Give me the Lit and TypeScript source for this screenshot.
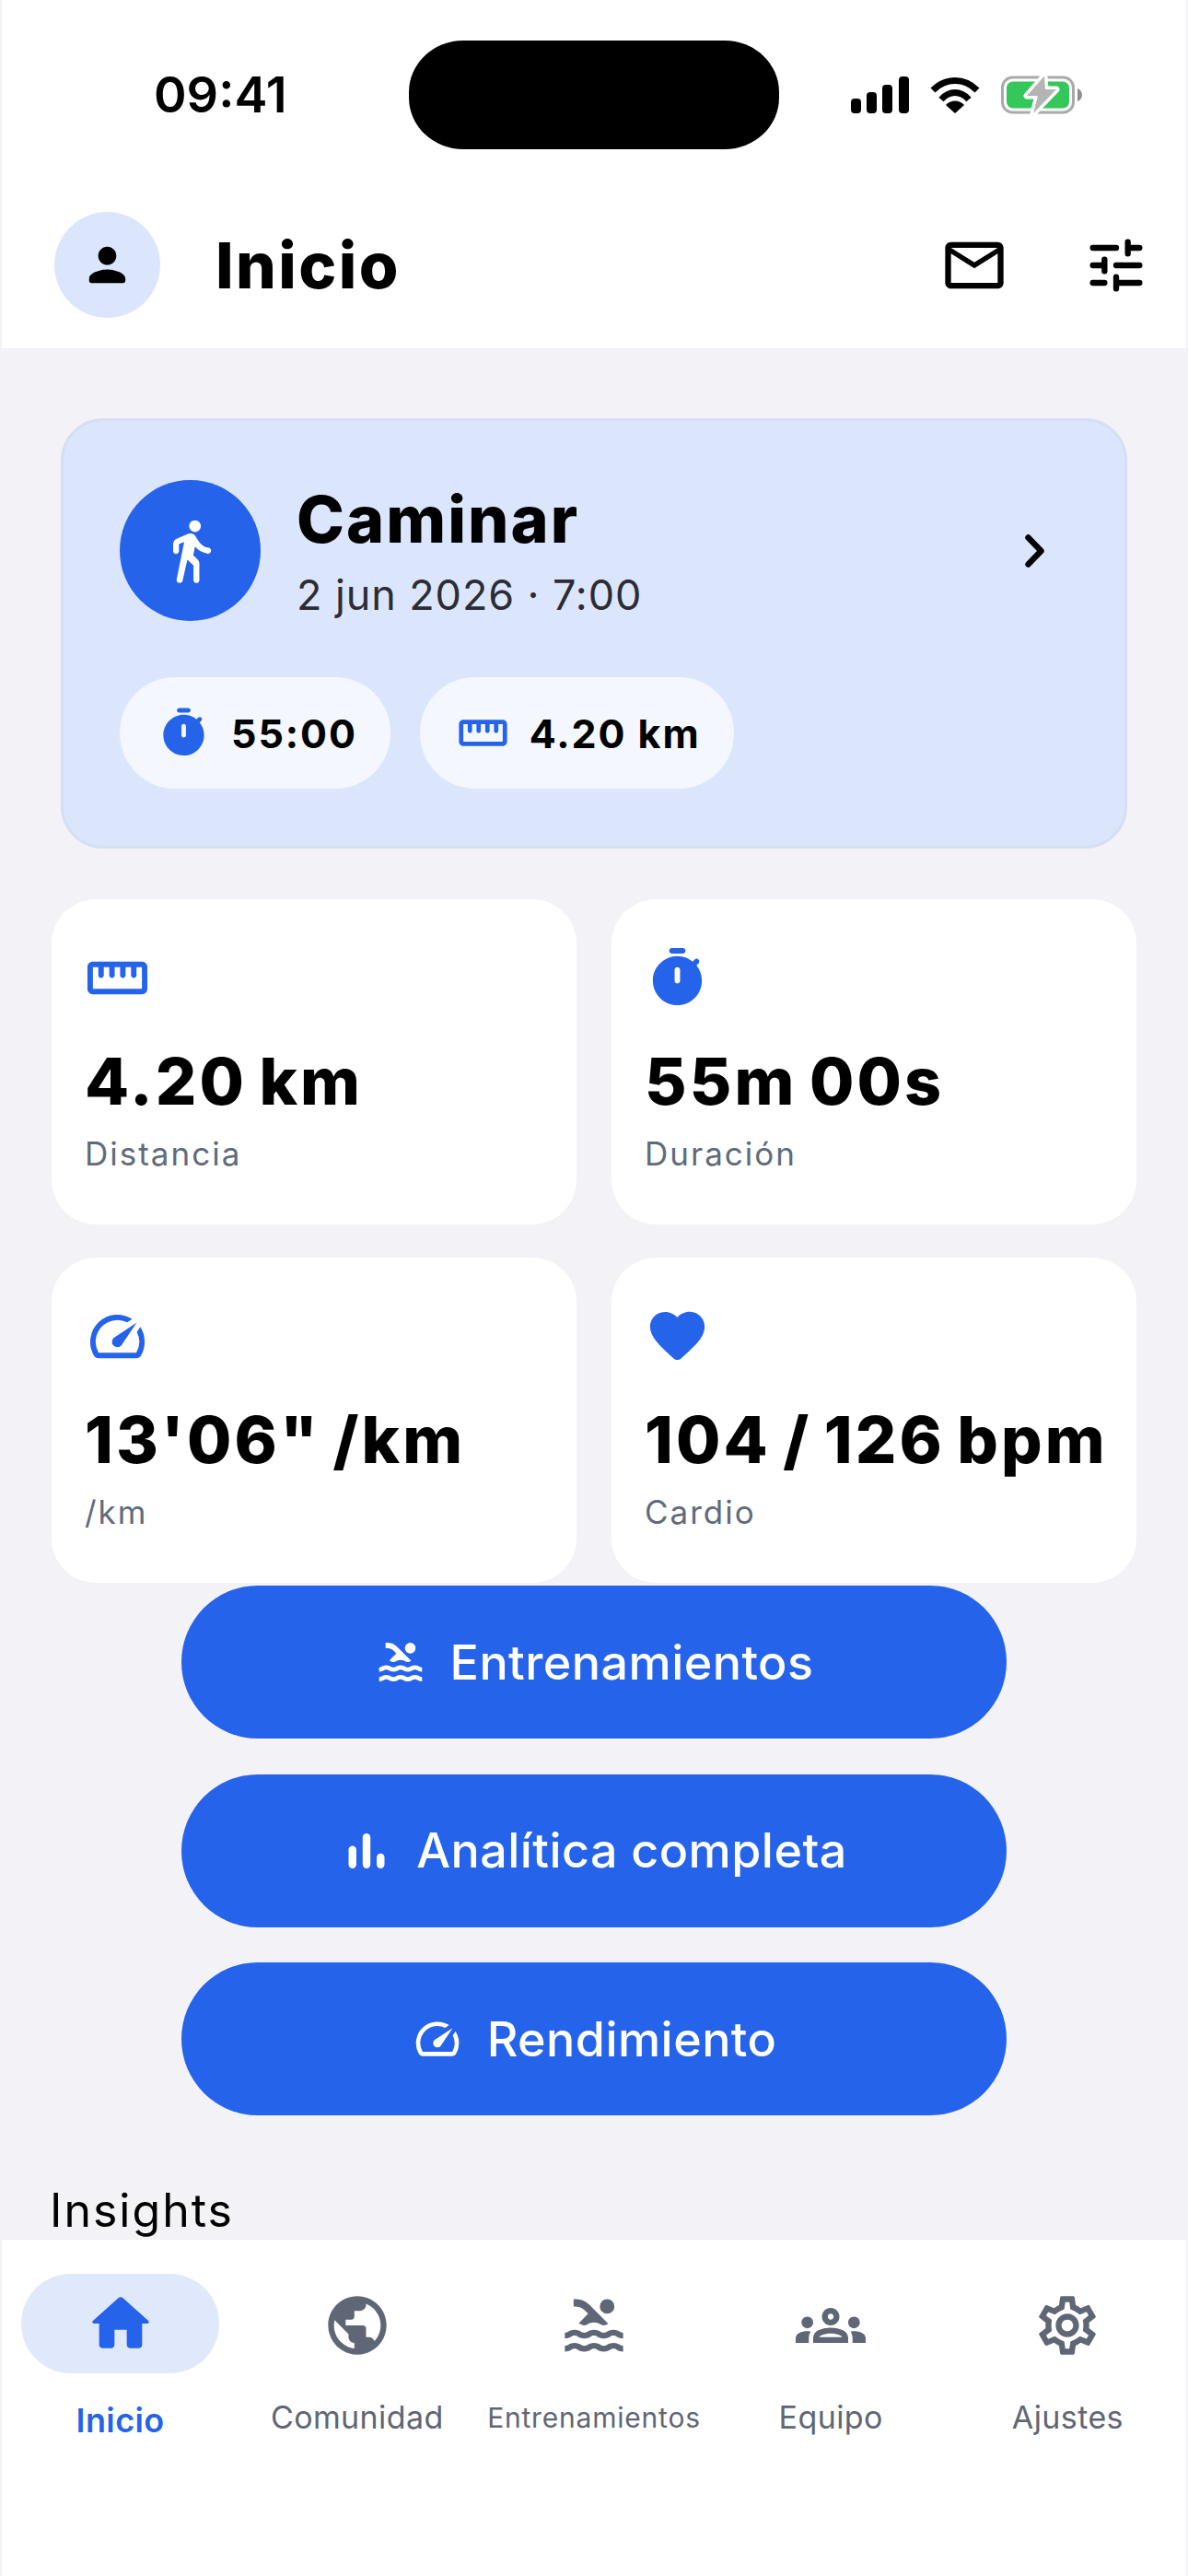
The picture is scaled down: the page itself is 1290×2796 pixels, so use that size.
import { LitElement, html, css, svg } from 'lit';
import { customElement } from 'lit/decorators.js';

// material-style glyphs, all on a 24 box
const ICONS: Record<string, any> = {
  person: svg`<path d="M12 12c2.21 0 4-1.79 4-4s-1.79-4-4-4-4 1.79-4 4 1.79 4 4 4zm0 2c-2.67 0-8 1.34-8 4v1c0 .55.45 1 1 1h14c.55 0 1-.45 1-1v-1c0-2.66-5.33-4-8-4z"/>`,
  mail: svg`<path d="M20 4H4c-1.1 0-1.99.9-1.99 2L2 18c0 1.1.9 2 2 2h16c1.1 0 2-.9 2-2V6c0-1.1-.9-2-2-2zm0 14H4V8l8 5 8-5v10zm-8-7L4 6h16l-8 5z"/>`,
  tune: svg`<path fill="none" stroke="currentColor" stroke-width="2" stroke-linecap="round" d="M4 6h8M16 4v4M16 6h4M4 12h3M8 10v4M12 12h8M4 18h4M12 16v4M12 18h8"/>`,
  walk: svg`<path d="M13.5 5.5c1.1 0 2-.9 2-2s-.9-2-2-2-2 .9-2 2 .9 2 2 2zM9.89 19.38l1-4.38 2.1 2v5c0 .55.45 1 1 1s1-.45 1-1v-5.64c0-.55-.22-1.07-.62-1.45L12.9 13.5l.6-3c1.07 1.24 2.62 2.13 4.36 2.41.6.09 1.14-.39 1.14-1 0-.49-.36-.9-.85-.98-1.52-.25-2.78-1.15-3.45-2.33l-1-1.6c-.56-.89-1.68-1.25-2.65-.84L7.22 7.78C6.48 8.1 6 8.82 6 9.63V12c0 .55.45 1 1 1s1-.45 1-1V9.6l1.8-.7L7.2 21.8c-.13.61.36 1.2 1 1.2h.08c.47 0 .87-.32.98-.78l.63-2.84z"/>`,
  timer: svg`<path fill-rule="evenodd" d="M14 1h-4c-.55 0-1 .45-1 1s.45 1 1 1h4c.55 0 1-.45 1-1s-.45-1-1-1zm-2 13c-.55 0-1-.45-1-1V9c0-.55.45-1 1-1s1 .45 1 1v4c0 .55-.45 1-1 1zm7.03-6.61l.75-.75c.38-.38.39-1.01 0-1.4l-.01-.01c-.39-.39-1.01-.38-1.4 0l-.75.75C16.07 4.74 14.12 4 12 4c-4.8 0-8.88 3.96-9 8.76C2.87 17.84 6.94 22 12 22c4.98 0 9-4.03 9-9 0-2.12-.74-4.07-1.97-5.61z"/>`,
  ruler: svg`<path d="M21 6H3c-1.1 0-2 .9-2 2v8c0 1.1.9 2 2 2h18c1.1 0 2-.9 2-2V8c0-1.1-.9-2-2-2zm0 10H3V8h2v3c0 .55.45 1 1 1s1-.45 1-1V8h2v3c0 .55.45 1 1 1s1-.45 1-1V8h2v3c0 .55.45 1 1 1s1-.45 1-1V8h2v3c0 .55.45 1 1 1s1-.45 1-1V8h2v8z"/>`,
  speed: svg`<path d="M20.38 8.57l-1.23 1.85a8 8 0 0 1-.22 7.58H5.07A8 8 0 0 1 15.58 6.85l1.85-1.23A10 10 0 0 0 3.35 19a2 2 0 0 0 1.72 1h13.85a2 2 0 0 0 1.74-1 10 10 0 0 0-.27-10.44zm-9.79 6.84a2 2 0 0 0 2.83 0l5.66-8.49-8.49 5.66a2 2 0 0 0 0 2.83z"/>`,
  heart: svg`<path d="M13.35 20.13c-.76.69-1.93.69-2.69-.01l-.11-.1C5.3 15.27 1.87 12.16 2 8.28c.06-1.7.93-3.33 2.34-4.29 2.64-1.8 5.9-.96 7.66 1.1 1.76-2.06 5.02-2.91 7.66-1.1 1.41.96 2.28 2.59 2.34 4.29.14 3.88-3.3 6.99-8.55 11.76l-.1.09z"/>`,
  pool: svg`<path d="M22 21c-1.11 0-1.73-.37-2.18-.64-.37-.22-.6-.36-1.15-.36-.56 0-.78.13-1.15.36-.46.27-1.07.64-2.18.64s-1.73-.37-2.18-.64c-.37-.22-.6-.36-1.15-.36-.56 0-.78.13-1.15.36-.46.27-1.08.64-2.19.64-1.11 0-1.73-.37-2.18-.64-.37-.23-.6-.36-1.15-.36s-.78.13-1.15.36c-.46.27-1.08.64-2.19.64v-2c.56 0 .78-.13 1.15-.36.46-.27 1.08-.64 2.19-.64s1.73.37 2.18.64c.37.23.59.36 1.15.36.56 0 .78-.13 1.15-.36.46-.27 1.08-.64 2.19-.64 1.11 0 1.73.37 2.18.64.37.22.6.36 1.15.36s.78-.13 1.15-.36c.45-.27 1.07-.64 2.18-.64s1.73.37 2.18.64c.37.23.59.36 1.15.36v2zm0-4.5c-1.11 0-1.73-.37-2.18-.64-.37-.22-.6-.36-1.15-.36-.56 0-.78.13-1.15.36-.45.27-1.07.64-2.18.64s-1.73-.37-2.18-.64c-.37-.22-.6-.36-1.15-.36-.56 0-.78.13-1.15.36-.45.27-1.07.64-2.18.64s-1.73-.37-2.18-.64c-.37-.22-.6-.36-1.15-.36s-.78.13-1.15.36c-.47.27-1.09.64-2.2.64v-2c.56 0 .78-.13 1.15-.36.45-.27 1.07-.64 2.18-.64s1.73.37 2.18.64c.37.22.6.36 1.15.36.56 0 .78-.13 1.15-.36.45-.27 1.07-.64 2.18-.64s1.73.37 2.18.64c.37.22.6.36 1.15.36s.78-.13 1.15-.36c.45-.27 1.07-.64 2.18-.64s1.73.37 2.18.64c.37.22.6.36 1.15.36v2zM8.67 12c.56 0 .78-.13 1.15-.36.46-.27 1.08-.64 2.19-.64 1.11 0 1.73.37 2.18.64.37.22.6.36 1.15.36s.78-.13 1.15-.36c.12-.07.26-.15.41-.23L10.48 5C8.93 3.45 7.5 2.99 5 3v2.5c1.82-.01 2.89.39 4 1.5l1 1-3.25 3.25c.31.12.56.27.77.39.37.23.59.36 1.15.36z"/><circle cx="16.5" cy="5.5" r="2.5"/>`,
  bars: svg`<rect x="3.65" y="9.65" width="3.6" height="10.5" rx="1.8"/><rect x="10.2" y="3.85" width="3.6" height="16.3" rx="1.8"/><rect x="16.75" y="13.15" width="3.6" height="7" rx="1.8"/>`,
  home: svg`<path d="M10 19v-5h4v5c0 .55.45 1 1 1h3c.55 0 1-.45 1-1v-7h1.7c.46 0 .68-.57.33-.87L12.67 3.6c-.38-.34-.96-.34-1.34 0l-8.36 7.53c-.34.3-.13.87.33.87H5v7c0 .55.45 1 1 1h3c.55 0 1-.45 1-1z"/>`,
  globe: svg`<path d="M12 2C6.48 2 2 6.48 2 12s4.48 10 10 10 10-4.48 10-10S17.52 2 12 2zM4 12c0-.61.08-1.21.21-1.78L8.99 15v1c0 1.1.9 2 2 2v1.93C7.06 19.43 4 16.07 4 12zm13.89 5.4c-.26-.81-1-1.4-1.9-1.4h-1v-3c0-.55-.45-1-1-1h-6v-2h2c.55 0 1-.45 1-1V7h2c1.1 0 2-.9 2-2v-.41C17.92 5.77 20 8.65 20 12c0 2.08-.81 3.98-2.11 5.4z"/>`,
  groups: svg`<path d="M4 13c1.1 0 2-.9 2-2s-.9-2-2-2-2 .9-2 2 .9 2 2 2zm1.13 1.1c-.37-.06-.74-.1-1.13-.1-.99 0-1.93.21-2.78.58C.48 14.9 0 15.62 0 16.43V18h4.5v-1.61c0-.83.23-1.61.63-2.29zM20 13c1.1 0 2-.9 2-2s-.9-2-2-2-2 .9-2 2 .9 2 2 2zm4 3.43c0-.81-.48-1.53-1.22-1.85-.85-.37-1.79-.58-2.78-.58-.39 0-.76.04-1.13.1.4.68.63 1.46.63 2.29V18H24v-1.57zm-7.76-2.78C15.07 13.14 13.63 12.75 12 12.75c-1.63 0-3.07.39-4.24.9C6.68 14.13 6 15.21 6 16.39V18h12v-1.61c0-1.18-.68-2.26-1.76-2.74zM8.07 16c.09-.23.13-.39.91-.69.97-.38 1.99-.56 3.02-.56s2.05.18 3.02.56c.77.3.81.46.91.69H8.07zM12 8c.55 0 1 .45 1 1s-.45 1-1 1-1-.45-1-1 .45-1 1-1m0-2c-1.66 0-3 1.34-3 3s1.34 3 3 3 3-1.34 3-3-1.34-3-3-3z"/>`,
  gear: svg`<path d="M19.43 12.98c.04-.32.07-.64.07-.98 0-.34-.03-.66-.07-.98l2.11-1.65c.19-.15.24-.42.12-.64l-2-3.46c-.09-.16-.26-.25-.44-.25-.06 0-.12.01-.17.03l-2.49 1c-.52-.4-1.08-.73-1.69-.98l-.38-2.65C14.46 2.18 14.25 2 14 2h-4c-.25 0-.46.18-.49.42l-.38 2.65c-.61.25-1.17.59-1.69.98l-2.49-1c-.06-.02-.12-.03-.18-.03-.17 0-.34.09-.43.25l-2 3.46c-.13.22-.07.49.12.64l2.11 1.65c-.04.32-.07.65-.07.98 0 .33.03.66.07.98l-2.11 1.65c-.19.15-.24.42-.12.64l2 3.46c.09.16.26.25.44.25.06 0 .12-.01.17-.03l2.49-1c.52.4 1.08.73 1.69.98l.38 2.65c.03.24.24.42.49.42h4c.25 0 .46-.18.49-.42l.38-2.65c.61-.25 1.17-.59 1.69-.98l2.49 1c.06.02.12.03.18.03.17 0 .34-.09.43-.25l2-3.46c.12-.22.07-.49-.12-.64l-2.11-1.65zm-1.98-1.71c.04.31.05.52.05.73 0 .21-.02.43-.05.73l-.14 1.13.89.7 1.08.84-.7 1.21-1.27-.51-1.04-.42-.9.68c-.43.32-.84.56-1.25.73l-1.06.43-.16 1.13-.2 1.35h-1.4l-.19-1.35-.16-1.13-1.06-.43c-.43-.18-.83-.41-1.23-.71l-.91-.7-1.06.43-1.27.51-.7-1.21 1.08-.84.89-.7-.14-1.13c-.03-.31-.05-.54-.05-.74s.02-.43.05-.73l.14-1.13-.89-.7-1.08-.84.7-1.21 1.27.51 1.04.42.9-.68c.43-.32.84-.56 1.25-.73l1.06-.43.16-1.13.2-1.35h1.39l.19 1.35.16 1.13 1.06.43c.43.18.83.41 1.23.71l.91.7 1.06-.43 1.27-.51.7 1.21-1.07.85-.89.7.14 1.13zM12 8c-2.21 0-4 1.79-4 4s1.79 4 4 4 4-1.79 4-4-1.79-4-4-4zm0 6c-1.1 0-2-.9-2-2s.9-2 2-2 2 .9 2 2-.9 2-2 2z"/>`,
};

const icon = (name: string, cls = '') =>
  html`<svg class="icon ${cls}" viewBox="0 0 24 24" fill="currentColor">${ICONS[name]}</svg>`;

const STATS = [
  { icon: 'ruler', cls: 'ruler', value: '4.20 km', label: 'Distancia' },
  { icon: 'timer', cls: '', value: '55m 00s', label: 'Duración' },
  { icon: 'speed', cls: '', value: `13'06" /km`, label: '/km' },
  { icon: 'heart', cls: '', value: '104 / 126 bpm', label: 'Cardio' },
];

const ACTIONS = [
  { icon: 'pool', label: 'Entrenamientos' },
  { icon: 'bars', label: 'Analítica completa' },
  { icon: 'speed', label: 'Rendimiento' },
];

const TABS = [
  { icon: 'home', label: 'Inicio', active: true },
  { icon: 'globe', label: 'Comunidad' },
  { icon: 'pool', label: 'Entrenamientos', small: true },
  { icon: 'groups', label: 'Equipo' },
  { icon: 'gear', label: 'Ajustes' },
];

@customElement('app-root')
export class AppRoot extends LitElement {
  static styles = css`
    :host {
      display: flex;
      flex-direction: column;
      width: 1290px;
      height: 2796px;
      overflow: hidden;
      background: #f2f2f7;
      color: #000;
      font-family: Inter, 'Liberation Sans', sans-serif;
    }

    .icon {
      display: block;
      flex: none;
      width: 76px;
      height: 76px;
    }

    .top {
      margin: 0 2px;
      background: #fff;
    }

    .status {
      display: flex;
      align-items: center;
      height: 118px;
      padding-top: 44px;
      padding-bottom: 68px;
    }

    .time {
      width: 277px;
      margin-left: 165px;
      font-size: 54px;
      font-weight: 600;
      line-height: 60px;
    }

    .island {
      width: 402px;
      height: 118px;
      border-radius: 59px / 56px;
      background: #000;
    }

    .status-icons {
      display: flex;
      align-items: center;
      gap: 23px;
      margin-left: 78px;
    }

    .status-icons svg {
      display: block;
    }

    .header {
      display: flex;
      align-items: center;
      height: 148px;
      padding: 0 38px 33px 57px;
      box-sizing: border-box;
    }

    .avatar {
      display: flex;
      align-items: center;
      justify-content: center;
      width: 115px;
      height: 115px;
      border-radius: 50%;
      background: #dbe6fd;
    }

    .avatar .icon {
      width: 59px;
      height: 59px;
    }

    .header h1 {
      flex: 1;
      margin: 0 0 0 60px;
      font-size: 69px;
      font-weight: 800;
      letter-spacing: 2.4px;
      line-height: 80px;
    }

    .header .mail {
      margin-right: 78px;
    }

    main {
      flex: 1;
      min-height: 0;
      overflow: hidden;
      padding: 76px 56px 0;
    }

    .activity {
      box-sizing: border-box;
      height: 467px;
      margin: 0 10px 55px;
      padding: 64px 61px;
      border: 3px solid #d4dff4;
      border-radius: 46px;
      background: #dbe6fd;
    }

    .activity-row {
      display: flex;
      align-items: center;
    }

    .activity-badge {
      display: flex;
      align-items: center;
      justify-content: center;
      width: 153px;
      height: 153px;
      border-radius: 50%;
      background: #2563eb;
      color: #fff;
    }

    .activity-text {
      flex: 1;
      margin-left: 39px;
    }

    .activity-title {
      font-size: 70px;
      font-weight: 800;
      letter-spacing: 2px;
      line-height: 84px;
    }

    .activity-date {
      margin-top: 13px;
      color: #2c2c34;
      font-size: 45px;
      letter-spacing: 0.9px;
      line-height: 54px;
    }

    .chevron {
      display: block;
      margin-right: 24px;
    }

    .chips {
      display: flex;
      gap: 32px;
      margin-top: 61px;
    }

    .chip {
      display: flex;
      align-items: center;
      gap: 22px;
      height: 121px;
      padding: 0 36px 0 40px;
      border-radius: 60px;
      background: #f4f7fe;
      font-size: 43px;
      font-weight: 700;
      letter-spacing: 1.9px;
    }

    .chip .icon {
      width: 59px;
      height: 59px;
      color: #2563eb;
    }

    .chip .icon.ruler {
      width: 57px;
      height: 57px;
    }

    .stats {
      display: grid;
      grid-template-columns: 570px 570px;
      grid-auto-rows: 353px;
      column-gap: 38px;
      row-gap: 36px;
    }

    .stat {
      padding: 50px 0 0 36px;
      border-radius: 48px;
      background: #fff;
    }

    .stat .icon {
      width: 71px;
      height: 71px;
      color: #2563eb;
    }

    .stat-value {
      margin-top: 35px;
      font-size: 70px;
      font-weight: 800;
      line-height: 84px;
      letter-spacing: 3.1px;
      word-spacing: -5px;
      white-space: nowrap;
    }

    .stat-label {
      margin-top: 15px;
      color: #5f6b7c;
      font-size: 35px;
      letter-spacing: 2px;
      line-height: 42px;
    }

    .actions {
      display: flex;
      flex-direction: column;
      gap: 38.5px;
      width: 896px;
      margin: 3px auto 0;
    }

    .action {
      display: flex;
      align-items: center;
      justify-content: center;
      gap: 26px;
      height: 166px;
      border-radius: 83px;
      background: #2563eb;
      color: #fff;
      font-size: 52px;
      font-weight: 500;
      letter-spacing: 0.45px;
    }

    .action .icon {
      width: 56px;
      height: 56px;
    }

    .insights {
      margin: 73px 0 0 -2px;
      font-size: 50px;
      font-weight: 400;
      letter-spacing: 2px;
      line-height: 60px;
    }

    nav {
      display: grid;
      grid-template-columns: repeat(5, 1fr);
      height: 365px;
      margin: 0 2px;
      padding-top: 37px;
      box-sizing: border-box;
      background: #fff;
    }

    .tab {
      display: flex;
      flex-direction: column;
      align-items: center;
      color: #5f6675;
    }

    .tab-icon {
      display: flex;
      align-items: center;
      justify-content: center;
      width: 215px;
      height: 108px;
      padding-top: 4px;
      box-sizing: border-box;
      border-radius: 54px;
    }

    .tab-label {
      margin-top: 26px;
      font-size: 34px;
      letter-spacing: 0.4px;
      line-height: 44px;
      white-space: nowrap;
    }

    .tab.small .tab-label {
      font-size: 30px;
      letter-spacing: 0.8px;
    }

    .tab.active {
      color: #2563eb;
    }

    .tab.active .tab-icon {
      padding-top: 0;
      background: #e0e8fb;
    }

    .tab.active .tab-icon .icon {
      width: 80px;
      height: 80px;
    }

    .tab.active .tab-label {
      margin-top: 29px;
      font-size: 36px;
      font-weight: 600;
    }
  `;

  private statusIcons() {
    return html`
      <svg width="63" height="40" viewBox="0 0 63 40" fill="#000">
        <rect x="0" y="24" width="11" height="16" rx="4"/>
        <rect x="17" y="17" width="11" height="23" rx="4"/>
        <rect x="34" y="9" width="11" height="31" rx="4"/>
        <rect x="52" y="0" width="11" height="40" rx="4"/>
      </svg>
      <svg width="54" height="40" viewBox="0 0 54 40" fill="none" stroke="#000" stroke-width="7">
        <path d="M3 15C17 1 37 1 51 15"/>
        <path d="M12 25C21 15 33 15 42 25"/>
        <path d="M27 40L17 31C22 25 32 25 37 31Z" fill="#000" stroke="none"/>
      </svg>
      <svg width="88" height="42" viewBox="0 0 88 42">
        <rect x="1.5" y="2" width="77" height="38" rx="11" fill="none" stroke="#a9a9a9" stroke-width="3"/>
        <rect x="6" y="6.5" width="68" height="29" rx="7" fill="#34c759"/>
        <path d="M83 14c3 1 5 4 5 7s-2 6-5 7z" fill="#8f8f8f"/>
        <path d="M47 0.5L28 22H40L35 41L60 15H48Z" fill="#b4b4b4" stroke="#fff" stroke-width="7" stroke-linejoin="round" paint-order="stroke"/>
      </svg>
    `;
  }

  render() {
    return html`
      <div class="top">
        <div class="status">
          <div class="time">09:41</div>
          <div class="island"></div>
          <div class="status-icons">${this.statusIcons()}</div>
        </div>
        <header class="header">
          <div class="avatar">${icon('person')}</div>
          <h1>Inicio</h1>
          ${icon('mail', 'mail')}
          ${icon('tune')}
        </header>
      </div>

      <main>
        <section class="activity">
          <div class="activity-row">
            <div class="activity-badge">${icon('walk')}</div>
            <div class="activity-text">
              <div class="activity-title">Caminar</div>
              <div class="activity-date">2 jun 2026 · 7:00</div>
            </div>
            <svg class="chevron" width="26" height="44" viewBox="0 0 26 44" fill="none" stroke="#000" stroke-width="6.5" stroke-linecap="round" stroke-linejoin="round">
              <path d="M6.5 7.5L20.5 22L6.5 36.5"/>
            </svg>
          </div>
          <div class="chips">
            <div class="chip">${icon('timer')}<span>55:00</span></div>
            <div class="chip">${icon('ruler', 'ruler')}<span>4.20 km</span></div>
          </div>
        </section>

        <section class="stats">
          ${STATS.map(
            (s) => html`
              <div class="stat">
                ${icon(s.icon, s.cls)}
                <div class="stat-value">${s.value}</div>
                <div class="stat-label">${s.label}</div>
              </div>
            `
          )}
        </section>

        <section class="actions">
          ${ACTIONS.map(
            (a) => html`<div class="action">${icon(a.icon)}<span>${a.label}</span></div>`
          )}
        </section>

        <h2 class="insights">Insights</h2>
      </main>

      <nav>
        ${TABS.map(
          (t) => html`
            <div class="tab ${t.active ? 'active' : ''} ${t.small ? 'small' : ''}">
              <div class="tab-icon">${icon(t.icon)}</div>
              <div class="tab-label">${t.label}</div>
            </div>
          `
        )}
      </nav>
    `;
  }
}
